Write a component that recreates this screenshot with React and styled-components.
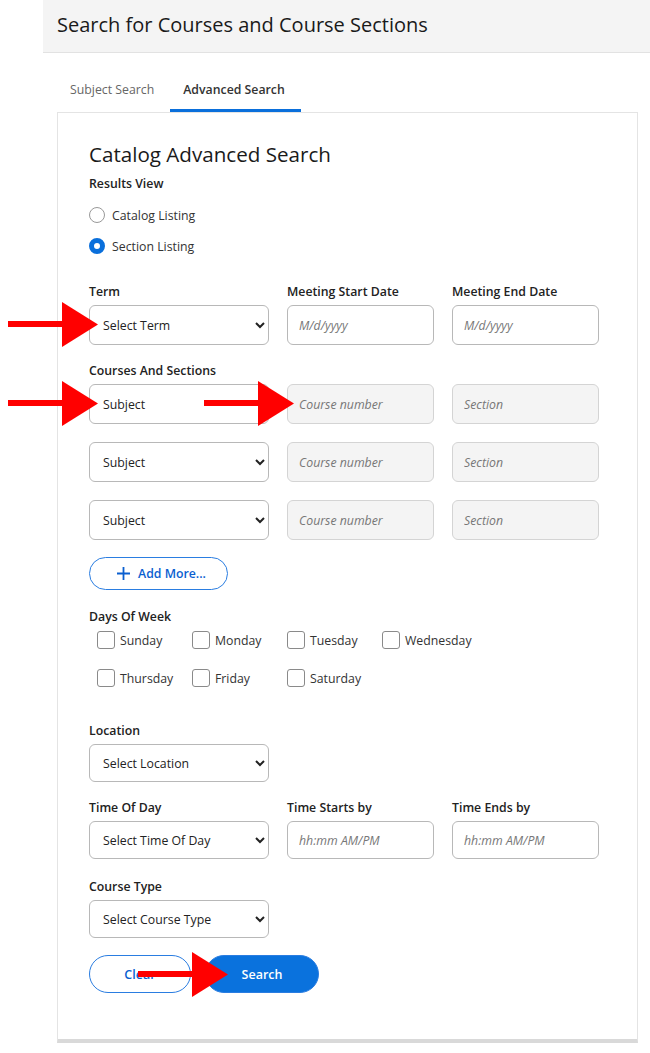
import React from "react";
import styled, { createGlobalStyle } from "styled-components";

const GlobalStyle = createGlobalStyle`
    body {
        margin: 0;
        background: #fff;
        font-family: "Open Sans", "Liberation Sans", sans-serif;
        color: #222;
    }
`

const Page = styled.div`
    position: relative;
    width: 650px;
    min-height: 1053px;
`
const Header = styled.div`
    margin-left: 43px;
    height: 53px;
    background: #f4f4f4;
    border-bottom: 1px solid #e2e2e2;
    display: flex;
    align-items: center;
    padding-left: 14px;
    box-sizing: border-box;
`
const Title = styled.h1`
    margin: 0 0 4px;
    font-size: 20px;
    font-weight: 400;
    color: #1a1a1a;
`
const Tabs = styled.div`
    display: flex;
    margin: 21px 0 0 57px;
`
const Tab = styled.div`
    padding: 7px 16px 11px 13px;
    font-size: 12.3px;
    font-weight: ${p => p.active ? 600 : 400};
    color: ${p => p.active ? "#333" : "#666"};
    border-bottom: 3px solid ${p => p.active ? "#0a6fdb" : "transparent"};
`
const Card = styled.div`
    margin-left: 57px;
    width: 581px;
    box-sizing: border-box;
    border: 1px solid #e4e4e4;
    border-bottom: 4px solid #d9d9d9;
    padding: 29px 31px 46px 31px;
`
const Heading = styled.h2`
    margin: 0;
    font-size: 20.6px;
    line-height: 24px;
    font-weight: 400;
    color: #1a1a1a;
`
const Label = styled.div`
    font-size: 12.3px;
    line-height: 18px;
    font-weight: 600;
    color: #222;
    width: ${p => p.w ? `${p.w}px` : "auto"};
    margin-top: ${p => p.top || 0}px;
    margin-bottom: ${p => p.bottom ?? 4}px;
`
const RadioGroup = styled.div`
    display: flex;
    flex-direction: column;
    gap: 11px;
    margin-top: 12px;
`
const RadioRow = styled.label`
    display: flex;
    align-items: center;
    height: 20px;
    gap: 7px;
    font-size: 12.3px;
    color: #333;
`
const Radio = styled.span`
    width: 16px;
    height: 16px;
    border-radius: 50%;
    box-sizing: border-box;
    border: ${p => p.checked ? "5px solid #0a6fdb" : "1px solid #999"};
    background: #fff;
`
const Row = styled.div`
    display: flex;
    gap: 18px;
    margin-bottom: ${p => p.bottom || 0}px;
`
const Select = styled.select`
    width: 180px;
    height: ${p => p.h || 40}px;
    border: 1px solid #b8b8b8;
    border-radius: 6px;
    background: #fff;
    padding: 0 8px 0 9px;
    font-family: "Open Sans", "Liberation Sans", sans-serif;
    font-size: 12.3px;
    color: #222;
`
const Input = styled.input`
    width: 147px;
    height: ${p => p.h || 40}px;
    box-sizing: border-box;
    border: 1px solid ${p => p.disabled ? "#d4d4d4" : "#b8b8b8"};
    border-radius: 6px;
    background: ${p => p.disabled ? "#f4f4f4" : "#fff"};
    padding: 0 11px;
    font-family: "Open Sans", "Liberation Sans", sans-serif;
    font-size: 12.3px;
    &::placeholder {
        color: #777;
        font-style: italic;
    }
`
const AddMore = styled.button`
    display: flex;
    align-items: center;
    gap: 7px;
    margin-top: 17px;
    width: 139px;
    height: 33px;
    padding: 0 0 0 26px;
    border: 1px solid #2a7de1;
    border-radius: 17px;
    background: #fff;
    color: #0a5fd0;
    font-family: "Open Sans", "Liberation Sans", sans-serif;
    font-size: 12.3px;
    font-weight: 600;
`
const DayGrid = styled.div`
    display: grid;
    grid-template-columns: repeat(4, 95px);
    row-gap: 14px;
    margin: 2px 0 0 8px;
`
const Day = styled.label`
    display: flex;
    align-items: center;
    gap: 5px;
    height: 24px;
    font-size: 12.3px;
    color: #333;
`
const Box = styled.span`
    width: 18px;
    height: 18px;
    box-sizing: border-box;
    border: 1px solid #8a8a8a;
    border-radius: 3px;
    background: #fff;
`
const Actions = styled.div`
    display: flex;
    gap: 14px;
    margin-top: 17px;
`
const Button = styled.button`
    height: 38px;
    width: ${p => p.w}px;
    border-radius: 19px;
    border: 1px solid #2a7de1;
    background: ${p => p.primary ? "#0a72dd" : "#fff"};
    color: ${p => p.primary ? "#fff" : "#0a5fd0"};
    font-family: "Open Sans", "Liberation Sans", sans-serif;
    font-size: 12.5px;
    font-weight: 600;
`
const Arrow = styled.svg`
    position: absolute;
    left: ${p => p.x}px;
    top: ${p => p.y}px;
    pointer-events: none;
`

function RedArrow({ x, y, shaft }) {
    // shaft then triangle head, head 36 wide and 45 tall
    return (
        <Arrow x={x} y={y} width={shaft + 36} height={45} viewBox={`0 0 ${shaft + 36} 45`}>
            <rect x="0" y="19" width={shaft + 2} height="6" fill="#ff0000" />
            <polygon points={`${shaft},0 ${shaft + 36},22.5 ${shaft},45`} fill="#ff0000" />
        </Arrow>
    )
}

const days = ["Sunday", "Monday", "Tuesday", "Wednesday", "Thursday", "Friday", "Saturday"]

export default function App() {
    return (
        <Page>
            <GlobalStyle />
            <Header>
                <Title>Search for Courses and Course Sections</Title>
            </Header>
            <Tabs>
                <Tab>Subject Search</Tab>
                <Tab active>Advanced Search</Tab>
            </Tabs>
            <Card>
                <Heading>Catalog Advanced Search</Heading>
                <Label top={9}>Results View</Label>
                <RadioGroup>
                    <RadioRow><Radio />Catalog Listing</RadioRow>
                    <RadioRow><Radio checked />Section Listing</RadioRow>
                </RadioGroup>

                <Row>
                    <Label top={27} w={180}>Term</Label>
                    <Label top={27} w={147}>Meeting Start Date</Label>
                    <Label top={27} w={147}>Meeting End Date</Label>
                </Row>
                <Row>
                    <Select><option>Select Term</option></Select>
                    <Input placeholder="M/d/yyyy" />
                    <Input placeholder="M/d/yyyy" />
                </Row>

                <Label top={17} bottom={4}>Courses And Sections</Label>
                {[0, 1, 2].map(i => (
                    <Row key={i} bottom={i < 2 ? 18 : 0}>
                        <Select><option>Subject</option></Select>
                        <Input disabled placeholder="Course number" />
                        <Input disabled placeholder="Section" />
                    </Row>
                ))}

                <AddMore>
                    <svg width="15" height="15" viewBox="0 0 15 15">
                        <path d="M7.5 1v13M1 7.5h13" stroke="#0a5fd0" strokeWidth="1.8" />
                    </svg>
                    Add More...
                </AddMore>

                <Label top={18} bottom={0}>Days Of Week</Label>
                <DayGrid>
                    {days.map(d => (
                        <Day key={d}><Box />{d}</Day>
                    ))}
                </DayGrid>

                <Label top={32}>Location</Label>
                <Select h={38}><option>Select Location</option></Select>

                <Row>
                    <Label top={17} w={180}>Time Of Day</Label>
                    <Label top={17} w={147}>Time Starts by</Label>
                    <Label top={17} w={147}>Time Ends by</Label>
                </Row>
                <Row>
                    <Select h={38}><option>Select Time Of Day</option></Select>
                    <Input h={38} placeholder="hh:mm AM/PM" />
                    <Input h={38} placeholder="hh:mm AM/PM" />
                </Row>

                <Label top={19}>Course Type</Label>
                <Select h={38}><option>Select Course Type</option></Select>

                <Actions>
                    <Button w={102}>Clear</Button>
                    <Button primary w={114}>Search</Button>
                </Actions>
            </Card>

            <RedArrow x={8} y={302} shaft={54} />
            <RedArrow x={8} y={381} shaft={54} />
            <RedArrow x={204} y={381} shaft={54} />
            <RedArrow x={138} y={952} shaft={54} />
        </Page>
    )
}
